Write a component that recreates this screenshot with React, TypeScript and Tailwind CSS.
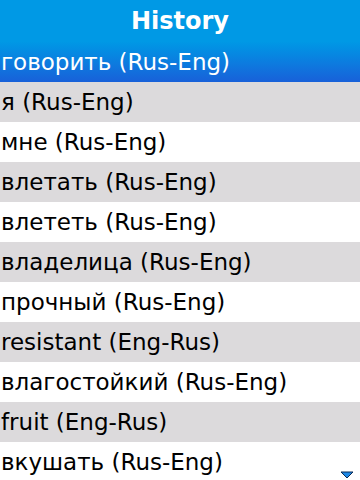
const items = [
  "говорить (Rus-Eng)",
  "я (Rus-Eng)",
  "мне (Rus-Eng)",
  "влетать (Rus-Eng)",
  "влететь (Rus-Eng)",
  "владелица (Rus-Eng)",
  "прочный (Rus-Eng)",
  "resistant (Eng-Rus)",
  "влагостойкий (Rus-Eng)",
  "fruit (Eng-Rus)",
  "вкушать (Rus-Eng)",
];

export default function App() {
  return (
    <div className="relative h-[480px] w-[360px] overflow-hidden bg-white font-['DejaVu_Sans',sans-serif]">
      <div className="flex h-[42px] items-center justify-center bg-[#0099e5] text-[24px] font-bold text-white">
        History
      </div>
      <ul>
        {items.map((item, i) => (
          <li
            key={item}
            className={
              i === 0
                ? "flex h-[40px] items-center bg-gradient-to-b from-[#0098e5] to-[#1860d9] pl-px text-[23px] text-white"
                : i % 2 === 1
                  ? "flex h-[40px] items-center bg-[#dcdadc] pl-px text-[23px] text-black"
                  : "flex h-[40px] items-center bg-white pl-px text-[23px] text-black"
            }
          >
            {item}
          </li>
        ))}
      </ul>
      <svg className="absolute left-[340px] top-[471px]" width="14" height="8" viewBox="0 0 14 8">
        <path d="M1 1 H13 L7 7 Z" fill="#1e88e5" stroke="#0b2a55" strokeWidth="1" />
      </svg>
    </div>
  );
}
